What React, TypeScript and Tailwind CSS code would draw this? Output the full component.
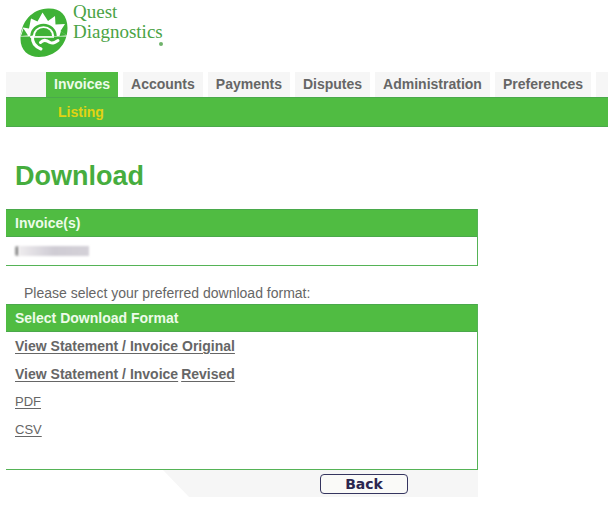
import clsx from "clsx";

const tabs = [
  "Invoices",
  "Accounts",
  "Payments",
  "Disputes",
  "Administration",
  "Preferences",
];

const formats = [
  { name: "PDF", href: "#pdf" },
  { name: "CSV", href: "#csv" },
];

function SunMark() {
  return (
    <svg width="48" height="50" viewBox="0 0 48 50" aria-hidden="true">
      <path
        d="M28 0.5 C40 0 47.500 7 47.500 20 C47.500 37 35 49 19 49 C8 49 0.5 42 0.5 31 C0.500 14 12 1 28 0.500 Z"
        fill="#3fb236"
      />
      {/* Rays */}
      <path
        d="M0 28.500 L3 19.500 L9 20.500 L11 10.500 L17.500 13.500 L22.500 4.500 L28 13 L35 8 L35.500 16.500 L45 16 L40.500 23 L48 28.500 Z"
        fill="#fff"
      />
      <path d="M1 28 L3.500 20.500 L8 27.500 Z M39.500 28 L41 23 L46.500 27.500 Z" fill="#3fb236" />
      {/* Rising disc */}
      <path
        d="M11.500 28 A12 11 0 0 1 35.500 28"
        fill="none"
        stroke="#3fb236"
        strokeWidth="2.500"
      />
      <path d="M15 28 A8.500 8 0 0 1 32 28 Z" fill="#3fb236" />
      <path d="M10 29 L34 29" stroke="#fff" strokeWidth="1.500" />
      <path
        d="M12.500 29 C12 35 15 38.500 21 41 M20.500 34.500 C24 30.500 28 33 30 34.500 C33 36 35 34.500 38 32.500"
        fill="none"
        stroke="#fff"
        strokeWidth="3"
        strokeLinecap="round"
      />
    </svg>
  );
}

function Logo() {
  return (
    <div className="flex h-[58px] items-start gap-[5px] px-[14px]">
      <div className="pt-2">
        <SunMark />
      </div>
      <div className="pt-[2px] font-['Liberation_Serif',serif] text-[19px] leading-5 text-[#4aa345]">
        <div>Quest</div>
        <div>Diagnostics</div>
        <div className="flex justify-end">
          <span className="size-1 rounded-full bg-[#6fb36b]" />
        </div>
      </div>
    </div>
  );
}

function Nav() {
  return (
    <nav className="mt-[14px] text-[14px] font-bold">
      <div className="flex h-[25px] gap-[5px]">
        <div className="-mr-[5px] w-10 bg-[#f6f6f6]" />
        {tabs.map((tab, i) => (
          <a
            key={tab}
            href={`#${tab.toLowerCase()}`}
            className={clsx(
              "px-2 leading-[25px]",
              i === 0 ? "bg-[#50bc42] text-[#edfbe9]" : "bg-[#f6f6f6] text-[#666]",
            )}
          >
            {tab}
          </a>
        ))}
        <div className="grow bg-[#f6f6f6]" />
      </div>
      <div className="flex h-[30px] items-center border-y border-[#4aa94b] bg-[#50bc42] px-[52px]">
        <a href="#listing" className="leading-5 text-[#e2d312]">
          Listing
        </a>
      </div>
    </nav>
  );
}

function PanelHeader({ title }: { title: string }) {
  return (
    <h2 className="border-y border-[#4aa94b] bg-[#50bc42] px-[9px] text-[14px] leading-[26px] font-bold text-[#edfbe9]">
      {title}
    </h2>
  );
}

export default function App() {
  return (
    <main className="bg-white pr-1 pl-[6px] font-['Liberation_Sans',Arial,sans-serif] text-[#666]">
      <Logo />
      <Nav />

      <h1 className="mt-[31px] px-[9px] text-[27px] leading-9 font-bold text-[#46ad3e]">
        Download
      </h1>

      <div className="mt-[15px] w-full max-w-[472px]">
        <section className="border-r border-b border-[#55b356]">
          <PanelHeader title="Invoice(s)" />
          {/* masked invoice number */}
          <div className="flex h-7 items-center px-[9px]">
            <span className="h-[10px] w-1 rounded-sm bg-[#999] blur-[1px]" />
            <span className="h-[10px] w-[70px] bg-linear-to-r from-[#eeecee] via-[#cfccd4] to-[#d4d1d8] blur-[1px]" />
          </div>
        </section>

        <p className="mt-4 px-[18px] text-[14px] leading-[22px]">
          Please select your preferred download format:
        </p>

        <section className="border-r border-b border-[#55b356]">
          <PanelHeader title="Select Download Format" />
          <ul className="h-[137px] px-[9px] text-[14px] leading-7 underline underline-offset-2">
            <li className="font-bold">
              <a href="#original">View Statement / Invoice Original</a>
            </li>
            <li className="flex gap-[3px] font-bold">
              <a href="#invoice">View Statement / Invoice</a>
              <a href="#revised">Revised</a>
            </li>
            {formats.map((format) => (
              <li key={format.name} className="text-[13px]">
                <a href={format.href}>{format.name}</a>
              </li>
            ))}
          </ul>
        </section>

        <div className="flex justify-end">
          <div className="flex h-[27px] w-[315px] items-center justify-end bg-[#f6f6f6] pr-[70px] [clip-path:polygon(0_0,100%_0,100%_100%,26px_100%)]">
            <button
              type="button"
              className="h-5 w-[88px] rounded-[4px] border border-[#35355f] bg-[#fafaf8] font-['DejaVu_Sans',sans-serif] text-[14px] leading-4 font-bold text-[#2b2650]"
            >
              Back
            </button>
          </div>
        </div>
      </div>
    </main>
  );
}
